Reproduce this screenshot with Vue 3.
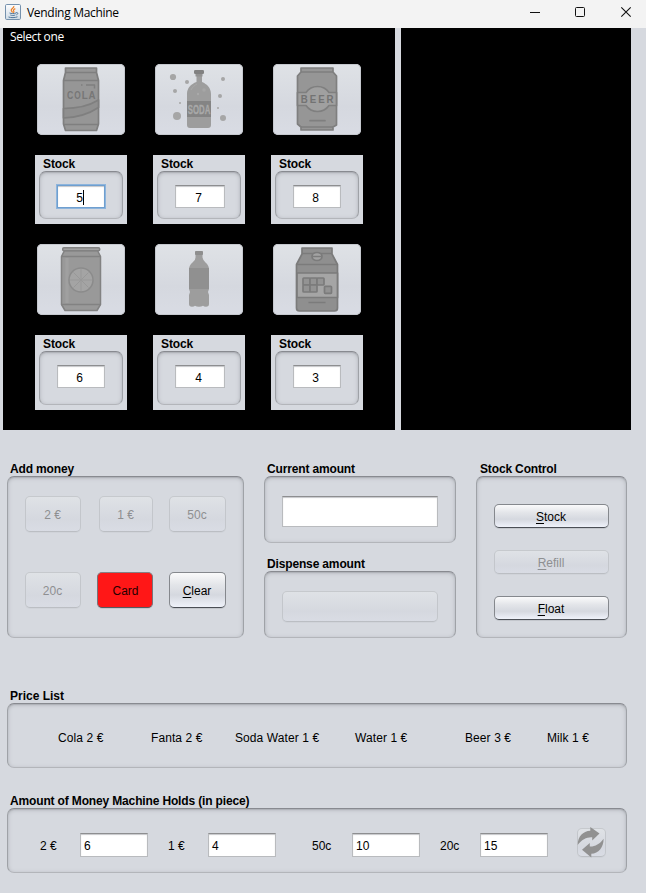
<script setup>
import { ref } from 'vue'

const rows = ref([
  [
    { id: 'cola', stock: 5, focused: true },
    { id: 'soda', stock: 7, wide: true },
    { id: 'beer', stock: 8 },
  ],
  [
    { id: 'fanta', stock: 6 },
    { id: 'water', stock: 4, wide: true },
    { id: 'milk', stock: 3 },
  ],
])

const bubbles = [
  [18, 13, 3.1], [32, 18, 2], [68, 15, 2], [20, 27, 2], [65, 32, 2],
  [25, 39, 1], [63, 44, 1], [22, 52, 4], [68, 54, 3],
]
const crates = [[30, 34], [37, 34], [44, 34], [30, 41], [37, 41], [51.5, 42.3]]
const prices = ['Cola 2 €', 'Fanta 2 €', 'Soda Water 1 €', 'Water 1 €', 'Beer 3 €', 'Milk 1 €']
const holdings = ref([
  { coin: '2 €', count: 6 },
  { coin: '1 €', count: 4 },
  { coin: '50c', count: 10 },
  { coin: '20c', count: 15 },
])
</script>

<template>
  <div class="window">
    <header class="titlebar">
      <svg class="java" width="16" height="16" viewBox="0 0 16 16">
        <defs>
          <linearGradient id="jv" x1="0" y1="0" x2="0" y2="1">
            <stop offset="0" stop-color="#fdfdfe" />
            <stop offset="1" stop-color="#cfdbe6" />
          </linearGradient>
        </defs>
        <rect x=".5" y=".5" width="15" height="15" rx="1.2" fill="url(#jv)" stroke="#7591ad" />
        <path d="M8.800 2c.7 2-3.300 2.500-2.500 4.600.3.800 1 1.200 1.300 1.900M10.300 4.600c-1.500.7-2.500 1.500-1.500 2.600.5.700 0 1.100-.5 1.500" fill="none" stroke="#ee7d22" stroke-width="1.200" />
        <path d="M4.500 9c1.500.7 4.800.7 6.500 0M5.300 11c1.500.6 3.500.6 5 0M3.500 13c2.500.9 6.500.8 9-.2M11 8.700c2.500-.6 2.300 1.600.3 2.200" fill="none" stroke="#52789c" stroke-width="1" />
      </svg>
      <span class="caption">Vending Machine</span>
      <div class="controls">
        <svg width="102" height="12" viewBox="0 0 102 12" fill="none" stroke="#111">
          <path d="M0 6.500h10" />
          <rect x="45.500" y="1.500" width="9" height="9" rx="1" />
          <path d="M91.300 1.300l9.400 9.400M100.700 1.300l-9.400 9.400" stroke-width="1.100" />
        </svg>
      </div>
    </header>

    <main class="content">
      <section class="displays">
        <div class="shelf">
          <div class="prompt">Select one</div>
          <div v-for="(row, r) in rows" :key="r" class="row" :class="{ tall: r === 1 }">
            <div v-for="p in row" :key="p.id" class="slot">
              <button class="product" :aria-label="p.id">
                <svg width="88" height="71" viewBox="0 0 88 71" stroke-linejoin="round">
                  <g v-if="p.id === 'cola'" stroke="#7f7f7f" stroke-width="1.700">
                    <path d="M28.500 4h31v4.500l2 8v43.500l-2 6.500h-31l-2-6.500V16.500l2-8z" fill="#969696" />
                    <path d="M28.500 8.500h31M26.500 16.500h35M26.500 60.500h35" fill="none" />
                    <path d="M26.500 44.500c16 0 26-3 35-8.500v7.500c-9 6-19 10-35 10.500z" fill="#8f8f8f" />
                    <path d="M49 21h8.500v3.500M44 21h1.500" fill="none" stroke-width="1.500" />
                    <g stroke="none" fill="#777" font-size="11.500" font-weight="bold" class="pic">
                      <text x="30" y="35" textLength="6.300" lengthAdjust="spacingAndGlyphs">C</text>
                      <text x="37.300" y="35" textLength="6.500" lengthAdjust="spacingAndGlyphs">O</text>
                      <text x="44.800" y="35" textLength="6" lengthAdjust="spacingAndGlyphs">L</text>
                      <text x="51.500" y="35" textLength="7" lengthAdjust="spacingAndGlyphs">A</text>
                    </g>
                  </g>
                  <g v-else-if="p.id === 'soda'">
                    <circle v-for="(b, i) in bubbles" :key="i" :cx="b[0]" :cy="b[1]" :r="b[2]" fill="#a6a6a6" />
                    <path d="M41.500 9h5.500v9c5 2 9 6 9 12v31q0 3-3 3H35q-3 0-3-3V30c0-6 4-10 9.500-12z" fill="#9d9d9d" />
                    <rect x="39" y="6" width="10" height="4" rx="1.300" fill="#818181" />
                    <rect x="40.500" y="10" width="7" height="2.500" fill="#929292" />
                    <path d="M36 26c1.500-3 4-5 6-6" fill="none" stroke="#a8a8a8" />
                    <circle cx="43" cy="30" r="1.200" fill="#a9a9a9" />
                    <circle cx="49" cy="26" r="1.800" fill="#a6a6a6" />
                    <rect x="32" y="37" width="24" height="16" fill="#848484" />
                    <text x="32.800" y="49.800" font-size="13" textLength="22.500" lengthAdjust="spacingAndGlyphs" fill="#a9a9a9" stroke="#a9a9a9" stroke-width=".3" font-weight="bold" class="pic">SODA</text>
                  </g>
                  <g v-else-if="p.id === 'beer'" stroke="#7f7f7f" stroke-width="1.700">
                    <path d="M28 4h32v4l3.500 4v49l-3.500 2v3H28v-3l-3.500-3V12L28 8z" fill="#969696" />
                    <path d="M28 8h32M28 63h32" fill="none" />
                    <path d="M24.500 28.500H33a14 14 0 0 1 23 0h7.500v13H56a14 14 0 0 1-23 0h-8.500z" fill="#a0a0a0" />
                    <path d="M37 56.700h15" stroke-linecap="round" />
                    <g stroke="none" fill="#737373" font-size="11" font-weight="bold" class="pic">
                      <text x="27.800" y="39.300" textLength="7" lengthAdjust="spacingAndGlyphs">B</text>
                      <text x="36.800" y="39.300" textLength="6.500" lengthAdjust="spacingAndGlyphs">E</text>
                      <text x="45.200" y="39.300" textLength="6.500" lengthAdjust="spacingAndGlyphs">E</text>
                      <text x="53.500" y="39.300" textLength="7" lengthAdjust="spacingAndGlyphs">R</text>
                    </g>
                  </g>
                  <g v-else-if="p.id === 'fanta'" stroke="#828282" stroke-width="1.500">
                    <path d="M27.500 6.500h33l3 6v48l-3.500 6H28l-3.500-6v-48z" fill="#999" />
                    <rect x="25.700" y="3.700" width="37" height="3" rx="1.200" fill="#a0a0a0" />
                    <path d="M24.500 12.500h39M24.500 60.500h39" fill="none" />
                    <path d="M30 14v45" stroke="#a0a0a0" stroke-width="3" />
                    <circle cx="44" cy="36" r="12" fill="#a4a4a4" stroke="#8b8b8b" />
                    <path d="M44 25v22M33 36h22M36.500 28.500l15 15M51.500 28.500l-15 15" stroke="#989898" stroke-width="1" />
                  </g>
                  <g v-else-if="p.id === 'water'">
                    <path d="M40.500 10.500h7v3q.5 3 3 5 3.500 3 3.500 7V45l-1 3 1 3v9q0 2.700-3 2.700-2 0-3-1-1.500 1-4 1t-4-1q-1 1-3 1-3 0-3-2.700v-9l1-3-1-3V25.500q0-4 3.500-7 3-2 3-5z" fill="#9d9d9d" />
                    <rect x="40" y="7" width="8" height="4" rx=".8" fill="#8e8e8e" />
                    <rect x="34" y="24" width="20" height="21" fill="#909090" />
                  </g>
                  <g v-else stroke="#7b7b7b" stroke-width="1.700">
                    <path d="M29 4h30v6l5.500 10.500V64q0 3-3 3h-35q-3 0-3-3V20.500L29 10z" fill="#8f8f8f" />
                    <path d="M29 9.500h30M24 20.500h40" fill="none" />
                    <rect x="24" y="29" width="40.500" height="24.500" fill="#a5a5a5" />
                    <ellipse cx="44" cy="12.500" rx="5" ry="4" fill="#a3a3a3" />
                    <path d="M39.500 12.500h9M35.500 58.500h17" />
                    <rect v-for="(c, i) in crates" :key="i" :x="c[0]" :y="c[1]" width="7" height="7" rx=".8" fill="#939393" />
                  </g>
                </svg>
              </button>
              <div class="stock">
                <div class="title">Stock</div>
                <div class="box">
                  <div class="field" :class="{ wide: p.wide, focused: p.focused }">
                    <span>{{ p.stock }}</span><i v-if="p.focused" class="caret"></i>
                  </div>
                </div>
              </div>
            </div>
          </div>
        </div>
        <div class="tray"></div>
      </section>

      <section class="middle">
        <div class="group">
          <div class="title">Add money</div>
          <div class="box coins">
            <button class="btn disabled c1">2 €</button>
            <button class="btn disabled c2 slim">1 €</button>
            <button class="btn disabled c3">50c</button>
            <button class="btn disabled c1">20c</button>
            <button class="btn red c2">Card</button>
            <button class="btn c3"><u>C</u>lear</button>
          </div>
        </div>
        <div class="amounts">
          <div class="group">
            <div class="title">Current amount</div>
            <div class="box amount"><div class="field"></div></div>
          </div>
          <div class="group">
            <div class="title">Dispense amount</div>
            <div class="box amount"><button class="btn disabled" aria-label="Dispense"></button></div>
          </div>
        </div>
        <div class="group">
          <div class="title inset">Stock Control</div>
          <div class="box control">
            <button class="btn"><u>S</u>tock</button>
            <button class="btn disabled"><u>R</u>efill</button>
            <button class="btn"><u>F</u>loat</button>
          </div>
        </div>
      </section>

      <section class="group prices">
        <div class="title">Price List</div>
        <div class="box">
          <span v-for="p in prices" :key="p">{{ p }}</span>
        </div>
      </section>

      <section class="group holdings">
        <div class="title">Amount of Money Machine Holds (in piece)</div>
        <div class="box">
          <template v-for="h in holdings" :key="h.coin">
            <span>{{ h.coin }}</span>
            <div class="field">{{ h.count }}</div>
          </template>
          <button class="btn disabled refresh" aria-label="Refresh">
            <svg width="29" height="29" viewBox="0 0 29 29" fill="#919191">
              <path d="M.7 17C.7 8.500 6 3 13.300 2.700V-1L22.500 5.500 15.200 12.500V9.300C10.500 8.800 4.500 11.500.7 17z" />
              <path d="M26.600 10.700C26.600 19.500 21.500 25.500 14.300 25.800V29.500L5 21.700 12.800 15V18.500C17.500 18.800 22.800 16.200 26.600 10.700z" />
            </svg>
          </button>
        </div>
      </section>
    </main>
  </div>
</template>

<style>
body {
  background: #d6d9df;
}
</style>

<style scoped>
* {
  box-sizing: border-box;
}
.window {
  width: 646px;
  height: 893px;
  overflow: hidden;
  background: #d6d9df;
  color: #000;
  font: 12px/16px "Liberation Sans", Arial, sans-serif;
}
.titlebar {
  height: 28px;
  display: flex;
  background: #f3f3f3;
  padding: 4px 14px 0 5px;
}
.caption {
  margin: -1px 0 0 6px;
  height: 20px;
  line-height: 20px;
  font-family: "Open Sans", "Noto Sans", sans-serif;
  font-size: 12px;
  letter-spacing: -0.3px;
}
.controls {
  margin-left: auto;
  padding-top: 2px;
}
.controls svg,
.product svg {
  display: block;
}
.displays {
  display: flex;
  gap: 6px;
  padding-left: 3px;
  height: 402px;
}
.shelf {
  width: 392px;
  background: #000;
}
.tray {
  width: 230px;
  background: #000;
}
.prompt {
  height: 36px;
  padding: 1px 0 0 7px;
  color: #fff;
  font-family: "Open Sans", "Noto Sans", sans-serif;
  letter-spacing: -0.38px;
}
.row {
  display: flex;
  gap: 26px;
  padding-left: 32px;
  height: 180px;
}
.slot {
  width: 92px;
}
.product {
  display: block;
  width: 88px;
  height: 71px;
  margin: 0 0 20px 2px;
  padding: 0;
  border: 0;
  border-radius: 5px;
  background: linear-gradient(#dfe2e6, #d5d8df 60%, #d9dce4);
  box-shadow: inset 0 0 0 1px #c5c8ce;
}
.pic {
  font-family: "Liberation Sans", Arial, sans-serif;
}
.stock {
  height: 69px;
  padding: 0 4px;
  background: #d6d9df;
}
.tall .stock {
  height: 75px;
}
.title {
  height: 16px;
  line-height: 18px;
  padding-left: 3px;
  font-weight: bold;
  letter-spacing: -0.15px;
  white-space: nowrap;
}
.title.inset {
  padding-left: 4px;
}
.stock .title {
  padding-left: 4px;
  letter-spacing: -0.1px;
}
.box {
  border: 1px solid #9fa2a7;
  border-top-color: #888a90;
  border-bottom-color: #b3b5ba;
  border-radius: 7px;
  box-shadow: inset 0 1px 1px #aeb1b7, inset 0 1px 4px #b4b7bd;
}
.stock .box {
  height: 48px;
  padding-top: 13px;
}
.tall .stock .box {
  height: 54px;
}
.field {
  height: 24px;
  background: #fff;
  border: 1px solid #b9bbbe;
  border-top: 1px solid #8d8e90;
  box-shadow: inset 0 1px 1px #c6c7ca;
  padding: 4px 3px 0;
}
.stock .field {
  display: flex;
  justify-content: center;
  width: 48px;
  height: 23px;
  margin: 0 0 0 17px;
  padding: 4px 6px 0 3px;
}
.stock .field.wide {
  width: 50px;
}
.stock .field.focused {
  outline: 1px solid #8db4dc;
  border-color: #6f9fcf;
}
.caret {
  width: 1px;
  height: 15px;
  margin-right: -1px;
  background: #000;
}
.middle {
  display: flex;
  gap: 20px;
  padding: 30px 0 0 7px;
  height: 257px;
}
.coins {
  width: 237px;
  height: 162px;
  padding: 19px 0 0 17px;
  display: grid;
  grid-template-columns: 72px 72px 57px;
  grid-template-rows: 36px 36px;
  row-gap: 40px;
}
.btn {
  display: block;
  padding: 2px 1px 0 0;
  color: #000;
  font: 12px/16px "Liberation Sans", Arial, sans-serif;
  border: 1px solid #85888d;
  border-bottom-color: #4b4f56;
  border-radius: 5px;
  background: linear-gradient(#fafafb, #e3e5e9 35%, #d5d8df 65%, #eff2fa);
  box-shadow: 0 1px 0 #c3c6cc;
}
.btn.disabled {
  color: #8e8f91;
  border-color: #c6c9cd #c3c6cb #bbbec3;
  background: linear-gradient(#dfe2e6, #d5d8df 65%, #d9dce4);
  box-shadow: 0 1px 0 #d0d3d9;
}
.btn.red {
  padding-left: 2px;
  color: #240000;
  background: #ff1717;
  border-color: #858084 #777479 #555a60;
}
.c1 {
  width: 56px;
}
.c2 {
  width: 56px;
}
.c2.slim {
  width: 54px;
  margin-left: 2px;
}
.btn u {
  text-underline-offset: 2px;
}
.amounts {
  width: 192px;
  display: flex;
  flex-direction: column;
  gap: 12px;
}
.amount {
  height: 67px;
  padding: 19px 17px 0;
}
.amount .field {
  height: 31px;
}
.amount .btn {
  width: 156px;
  height: 31px;
}
.control {
  width: 151px;
  height: 162px;
  padding: 27px 17px 0;
  display: flex;
  flex-direction: column;
  gap: 22px;
}
.control .btn {
  height: 24px;
}
.prices,
.holdings {
  width: 620px;
  margin-left: 7px;
}
.prices .box {
  height: 65px;
  padding: 26px 0 0 50px;
  display: grid;
  grid-template-columns: 93px 84px 120px 110px 82px 60px;
  white-space: nowrap;
  letter-spacing: 0.09px;
}
.prices .title {
  letter-spacing: 0;
}
.holdings {
  margin-top: 24px;
}
.holdings .box {
  height: 65px;
  padding: 24px 0 0 32px;
  display: grid;
  grid-template-columns: 40px 68px 20px 40px 68px 36px 40px 68px 20px 40px 68px 29px 29px;
}
.holdings span {
  padding-top: 5px;
}
.holdings span:nth-of-type(1) {
  grid-column: 1;
}
.holdings span:nth-of-type(2) {
  grid-column: 4;
}
.holdings span:nth-of-type(3) {
  grid-column: 7;
}
.holdings span:nth-of-type(4) {
  grid-column: 10;
}
.refresh {
  grid-column: 13;
  width: 29px;
  height: 29px;
  margin-top: -5px;
  padding: 0;
}
.refresh svg {
  display: block;
  margin: -1px 0 0 -1px;
  overflow: visible;
}
</style>
